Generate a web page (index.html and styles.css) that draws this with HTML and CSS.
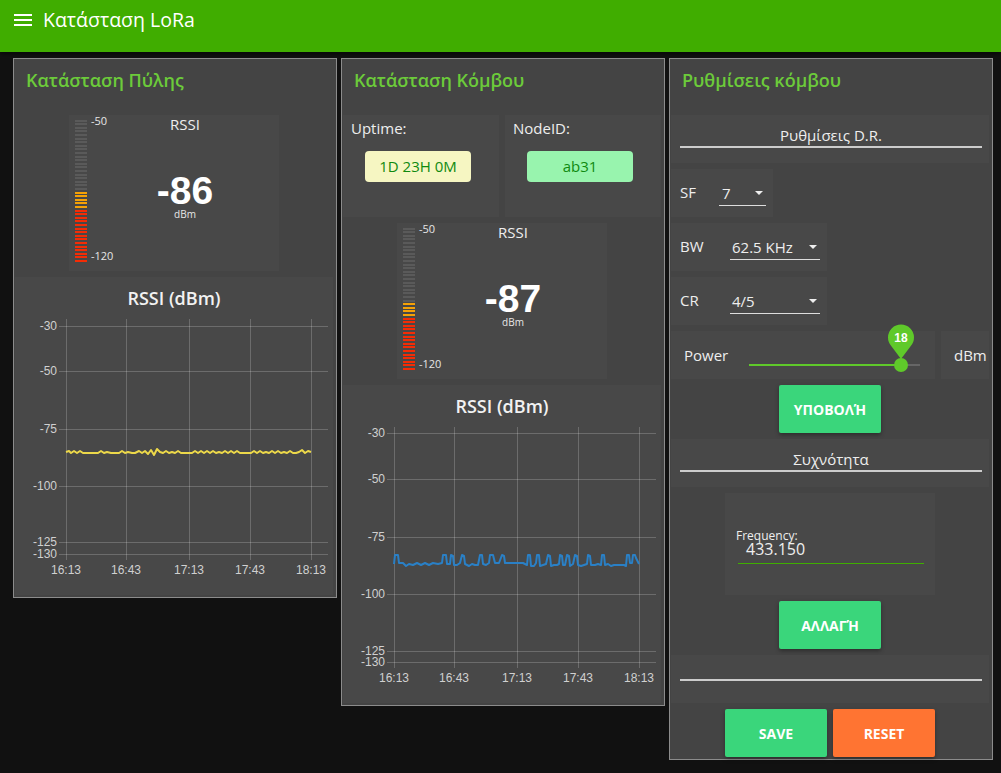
FILE: index.html
```html
<!DOCTYPE html>
<html lang="el">
<head>
<meta charset="utf-8">
<title>Κατάσταση LoRa</title>
<link rel="stylesheet" href="styles.css">
</head>
<body>
<header class="topbar">
  <div class="topbar-row">
    <svg class="menu-icon" width="18" height="12" viewBox="0 0 18 12"><rect y="0" width="18" height="2"/><rect y="5" width="18" height="2"/><rect y="10" width="18" height="2"/></svg>
    <span class="app-title">Κατάσταση LoRa</span>
  </div>
</header>
<main class="board">
  <section class="panel">
    <h2 class="panel-title">Κατάσταση Πύλης</h2>
    <div class="grid">
      <div class="w gauge">
        <div class="g-scale">
          <div class="g-bar" style="--lit:71px"></div>
          <div class="g-ticks"><span>-50</span><span>-120</span></div>
        </div>
        <div class="g-read">
          <div class="g-label">RSSI</div>
          <div class="g-value">-86</div>
          <div class="g-unit">dBm</div>
        </div>
      </div>
      <div class="w chart-w">
        <svg class="chart" width="318" height="318" viewBox="0 0 318 318">
          <text class="c-title" x="159" y="28" text-anchor="middle">RSSI (dBm)</text>
          <g class="c-grid">
            <line x1="44" y1="49.5" x2="313" y2="49.5"/><line x1="44" y1="94.5" x2="313" y2="94.5"/><line x1="44" y1="152.5" x2="313" y2="152.5"/><line x1="44" y1="209.5" x2="313" y2="209.5"/><line x1="44" y1="265.5" x2="313" y2="265.5"/><line x1="44" y1="277.5" x2="313" y2="277.5"/>
            <line x1="51.5" y1="42" x2="51.5" y2="283"/><line x1="111.5" y1="42" x2="111.5" y2="283"/><line x1="174.5" y1="42" x2="174.5" y2="283"/><line x1="235.5" y1="42" x2="235.5" y2="283"/><line x1="296.5" y1="42" x2="296.5" y2="283"/>
          </g>
          <g class="c-lab" text-anchor="end">
            <text x="42" y="53">-30</text><text x="42" y="98">-50</text><text x="42" y="156">-75</text><text x="42" y="213">-100</text><text x="42" y="269">-125</text><text x="42" y="281">-130</text>
          </g>
          <g class="c-lab" text-anchor="middle">
            <text x="51" y="297">16:13</text><text x="111" y="297">16:43</text><text x="174" y="297">17:13</text><text x="235" y="297">17:43</text><text x="296" y="297">18:13</text>
          </g>
          <polyline class="c-line c-yellow" points="51,175 54,174 56,176 59,174 62,176 65,174 68,176 71,176 75,176 79,176 83,176 86,174 89,176 92,175 96,176 100,176 104,176 107,174 110,176 113,175 117,176 120,176 124,174 127,176 130,174 133,177 136,173 139,178 142,172 145,175 148,176 151,174 154,176 157,175 160,176 163,174 166,176 169,176 173,176 177,176 180,174 183,176 186,174 189,176 192,174 195,176 198,174 201,176 204,175 207,176 210,174 213,176 216,174 219,176 222,174 225,176 228,176 232,176 236,176 239,174 242,176 245,174 248,176 251,175 254,176 257,174 260,176 263,174 266,176 269,175 272,176 275,174 278,176 281,176 284,175 287,173 290,176 293,174 296,175"/>
        </svg>
      </div>
    </div>
  </section>

  <section class="panel">
    <h2 class="panel-title">Κατάσταση Κόμβου</h2>
    <div class="grid">
      <div class="w info">
        <div class="info-label">Uptime:</div>
        <div class="badge badge-yellow">1D 23H 0M</div>
      </div>
      <div class="w info">
        <div class="info-label">NodeID:</div>
        <div class="badge badge-green">ab31</div>
      </div>
      <div class="w gauge">
        <div class="g-scale">
          <div class="g-bar" style="--lit:68px"></div>
          <div class="g-ticks"><span>-50</span><span>-120</span></div>
        </div>
        <div class="g-read">
          <div class="g-label">RSSI</div>
          <div class="g-value">-87</div>
          <div class="g-unit">dBm</div>
        </div>
      </div>
      <div class="w chart-w">
        <svg class="chart" width="318" height="318" viewBox="0 0 318 318">
          <text class="c-title" x="159" y="28" text-anchor="middle">RSSI (dBm)</text>
          <g class="c-grid">
            <line x1="44" y1="48.5" x2="313" y2="48.5"/><line x1="44" y1="94.5" x2="313" y2="94.5"/><line x1="44" y1="152.5" x2="313" y2="152.5"/><line x1="44" y1="209.5" x2="313" y2="209.5"/><line x1="44" y1="266.5" x2="313" y2="266.5"/><line x1="44" y1="277.5" x2="313" y2="277.5"/>
            <line x1="51.5" y1="42" x2="51.5" y2="283"/><line x1="111.5" y1="42" x2="111.5" y2="283"/><line x1="174.5" y1="42" x2="174.5" y2="283"/><line x1="235.5" y1="42" x2="235.5" y2="283"/><line x1="296.5" y1="42" x2="296.5" y2="283"/>
          </g>
          <g class="c-lab" text-anchor="end">
            <text x="42" y="52">-30</text><text x="42" y="98">-50</text><text x="42" y="156">-75</text><text x="42" y="213">-100</text><text x="42" y="270">-125</text><text x="42" y="281">-130</text>
          </g>
          <g class="c-lab" text-anchor="middle">
            <text x="51" y="297">16:13</text><text x="111" y="297">16:43</text><text x="174" y="297">17:13</text><text x="235" y="297">17:43</text><text x="296" y="297">18:13</text>
          </g>
          <polyline class="c-line c-blue" points="51,179 52,170 55,170 56,178 60,178 63,181 66,179 70,180 74,178 78,180 82,178 86,180 90,178 95,179 99,178 100,170 103,170 104,179 107,179 108,170 110,171 111,180 114,180 117,178 119,170 121,171 122,179 126,181 129,179 132,180 135,180 137,170 139,170 140,179 143,180 146,178 147,170 150,170 152,178 156,178 159,170 161,171 162,178 166,178 170,178 175,178 180,178 184,180 185,170 187,170 188,181 191,181 193,178 194,170 196,170 197,181 200,180 203,179 205,170 207,171 208,181 211,180 214,180 216,179 217,170 219,171 220,180 222,180 224,170 226,171 227,181 230,179 232,170 234,171 235,180 238,181 241,180 244,179 245,170 247,171 248,180 252,180 255,179 258,180 259,170 261,170 262,180 265,179 268,181 271,180 274,180 278,180 281,180 283,181 284,170 286,170 287,178 289,178 290,170 292,170 293,173 296,179"/>
        </svg>
      </div>
    </div>
  </section>

  <section class="panel">
    <h2 class="panel-title">Ρυθμίσεις κόμβου</h2>
    <div class="grid">
      <div class="w text-w full"><div class="text-line">Ρυθμίσεις D.R.</div></div>
      <div class="w select-w span2">
        <span class="sel-label sel-label-sf">SF</span>
        <div class="select sel-sf"><span>7</span><i class="caret"></i></div>
      </div>
      <div class="w select-w span3">
        <span class="sel-label">BW</span>
        <div class="select"><span>62.5 KHz</span><i class="caret"></i></div>
      </div>
      <div class="w select-w span3">
        <span class="sel-label">CR</span>
        <div class="select"><span>4/5</span><i class="caret"></i></div>
      </div>
      <div class="w slider-w">
        <span class="slider-label">Power</span>
        <svg class="slider" width="171" height="48" viewBox="0 0 171 48">
          <line x1="0" y1="34" x2="171" y2="34" class="s-track"/>
          <line x1="0" y1="34" x2="152" y2="34" class="s-fill"/>
          <circle cx="152" cy="34" r="7" class="s-thumb"/>
          <path d="M152 28 L142.6 15.4 A13 13 0 1 1 161.4 15.4 Z" class="s-thumb"/>
          <text x="152" y="11" text-anchor="middle" class="s-val">18</text>
        </svg>
      </div>
      <div class="w unit-w">dBm</div>
      <button class="btn btn-green btn-center">ΥΠΟΒΟΛΉ</button>
      <div class="w text-w full"><div class="text-line">Συχνότητα</div></div>
      <div class="w freq-w">
        <div class="freq-label">Frequency:</div>
        <div class="freq-input">433.150</div>
      </div>
      <button class="btn btn-green btn-center">ΑΛΛΑΓΉ</button>
      <div class="w text-w full text-empty"><div class="text-line"></div></div>
      <button class="btn btn-green btn-save">SAVE</button>
      <button class="btn btn-orange">RESET</button>
    </div>
  </section>
</main>
</body>
</html>
```

FILE: styles.css
```css
html, body {
  margin: 0;
  padding: 0;
}
body {
  background: #111111;
  color: #eeeeee;
  font-family: "Open Sans", "Noto Sans", sans-serif;
  width: 1001px;
  height: 773px;
  overflow: hidden;
}

/* top bar */
.topbar {
  height: 52px;
  background: #40ad00;
  box-shadow: 0 2px 4px rgba(0, 0, 0, 0.6);
}
.topbar-row {
  height: 40px;
  display: flex;
  align-items: center;
  padding-left: 14px;
}
.menu-icon {
  fill: #ffffff;
  display: block;
}
.app-title {
  margin-left: 11px;
  font-size: 19.5px;
  line-height: 40px;
  color: #ffffff;
}

/* board */
.board {
  display: flex;
  align-items: flex-start;
  gap: 4px;
  padding: 6px 0 0 13px;
}
.panel {
  box-sizing: border-box;
  width: 324px;
  border: 1px solid #8c8c8c;
  background: #444444;
  padding: 0 2px 2px 1px;
}
.panel-title {
  margin: 0;
  box-sizing: border-box;
  height: 50px;
  padding: 10px 0 0 11px;
  font-size: 18px;
  line-height: 22px;
  font-weight: 600;
  color: #6ccb3a;
}
.grid {
  margin-top: 6px;
  display: grid;
  grid-template-columns: repeat(6, 48px);
  grid-auto-rows: 48px;
  gap: 6px;
}
.w {
  background: #484848;
  box-sizing: border-box;
}

/* gauge */
.gauge {
  grid-column: 2 / span 4;
  grid-row: span 3;
  display: flex;
}
.g-scale {
  display: flex;
  padding: 3px 0 0 6px;
  width: 40px;
  box-sizing: border-box;
  flex: none;
}
.g-bar {
  flex: none;
  width: 12px;
  height: 144px;
  background:
    repeating-linear-gradient(to top, transparent 0 2px, #484848 2px 3.6px),
    linear-gradient(to top, #f42c05 0 53px, #f5a106 53px var(--lit), #5a5a5a var(--lit));
}
.g-ticks {
  margin: -3px 0 0 4px;
  height: 147px;
  display: flex;
  flex-direction: column;
  justify-content: space-between;
  font-size: 11px;
  line-height: 12px;
  color: #e6e6e6;
}
.g-read {
  flex: 1;
  margin-right: 18px;
  display: flex;
  flex-direction: column;
  align-items: center;
}
.g-label {
  font-size: 15px;
  line-height: 18px;
  color: #eeeeee;
}
.g-value {
  margin-top: 41px;
  font-family: "Liberation Sans", Arial, sans-serif;
  font-weight: bold;
  font-size: 39px;
  line-height: 34px;
  color: #ffffff;
}
.g-unit {
  margin-top: 0;
  font-size: 10px;
  line-height: 12px;
  color: #e6e6e6;
}

/* charts */
.chart-w {
  grid-column: 1 / span 6;
  grid-row: span 6;
}
.chart {
  display: block;
}
.c-title {
  font-family: "Open Sans", sans-serif;
  font-weight: 600;
  font-size: 18px;
  fill: #f2f2f2;
}
.c-grid line {
  stroke: rgba(255, 255, 255, 0.2);
  stroke-width: 1;
}
.c-lab {
  font-family: "Liberation Sans", Arial, sans-serif;
  font-size: 12px;
  fill: #d0d0d0;
}
.c-line {
  fill: none;
  stroke-width: 2;
  stroke-linejoin: round;
}
.c-yellow {
  stroke: #ecd84a;
}
.c-blue {
  stroke: #2a80c6;
}

/* info badges */
.info {
  grid-column: span 3;
  grid-row: span 2;
  padding: 4px 0 0 8px;
}
.info-label {
  font-size: 15px;
  line-height: 18px;
  color: #eeeeee;
}
.badge {
  margin: 14px 0 0 14px;
  width: 106px;
  height: 31px;
  border-radius: 4px;
  text-align: center;
  font-size: 15px;
  line-height: 31px;
  color: #108a10;
}
.badge-yellow {
  background: #f6f6c2;
}
.badge-green {
  background: #98f4ae;
}

/* text widgets */
.full {
  grid-column: 1 / span 6;
}
.text-w {
  padding: 10px 7px 0 9px;
}
.text-line {
  font-size: 15px;
  line-height: 20px;
  padding-bottom: 1px;
  text-align: center;
  border-bottom: 2px solid #cccccc;
  color: #eeeeee;
}
.text-empty {
  padding-top: 0;
}
.text-empty .text-line {
  height: 24px;
  padding-bottom: 0;
}

/* dropdowns */
.select-w {
  display: flex;
  align-items: flex-start;
  padding: 15px 0 0 9px;
}
.span2 {
  grid-column: 1 / span 2;
}
.span3 {
  grid-column: 1 / span 3;
}
.sel-label {
  width: 50px;
  margin-top: -2px;
  font-size: 15px;
  line-height: 20px;
}
.sel-label-sf {
  width: 39px;
}
.select {
  box-sizing: border-box;
  width: 90px;
  height: 22px;
  padding: 0 3px 3px 2px;
  border-bottom: 1px solid #dddddd;
  display: flex;
  align-items: center;
  justify-content: space-between;
  font-size: 15px;
  line-height: 18px;
}
.sel-sf {
  width: 47px;
  padding-left: 3px;
}
.caret {
  width: 0;
  height: 0;
  border-left: 4px solid transparent;
  border-right: 4px solid transparent;
  border-top: 4px solid #eeeeee;
}

/* slider */
.slider-w {
  grid-column: 1 / span 5;
  display: flex;
  align-items: flex-start;
  padding-left: 13px;
}
.slider-label {
  width: 65px;
  margin-top: 14px;
  font-size: 15px;
  line-height: 20px;
}
.slider {
  display: block;
  overflow: visible;
}
.s-track {
  stroke: #666666;
  stroke-width: 2;
}
.s-fill {
  stroke: #5fc92a;
  stroke-width: 2;
}
.s-thumb {
  fill: #5fc92a;
}
.s-val {
  font-family: "Liberation Sans", Arial, sans-serif;
  font-weight: bold;
  font-size: 12px;
  fill: #ffffff;
}
.unit-w {
  grid-column: 6;
  padding-left: 13px;
  font-size: 15px;
  line-height: 48px;
}

/* buttons */
.btn {
  border: none;
  border-radius: 2px;
  margin: 0;
  padding: 0;
  font-family: "Open Sans", sans-serif;
  font-weight: 700;
  font-size: 14px;
  color: #ffffff;
  box-shadow: 0 2px 4px rgba(0, 0, 0, 0.35);
}
.btn-green {
  background: #3ad67b;
}
.btn-orange {
  background: #ff7432;
  grid-column: 4 / span 2;
}
.btn-center {
  grid-column: 3 / span 2;
}
.btn-save {
  grid-column: 2 / span 2;
}

/* frequency input */
.freq-w {
  grid-column: 2 / span 4;
  grid-row: span 2;
  padding: 38px 11px 0 13px;
}
.freq-label {
  margin-left: -2px;
  font-size: 12px;
  line-height: 10px;
  color: #eeeeee;
}
.freq-input {
  padding: 1px 0 7px 8px;
  font-size: 16px;
  line-height: 14px;
  border-bottom: 1px solid #3fae00;
  color: #eeeeee;
}
```
